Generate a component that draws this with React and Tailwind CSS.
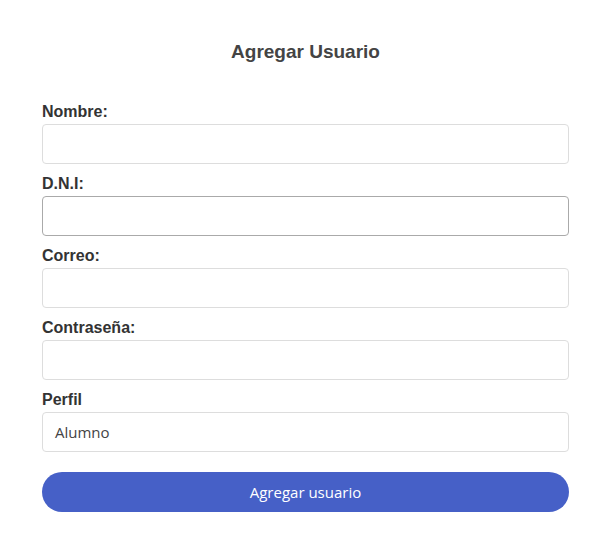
const FIELDS = [
  { label: "Nombre:", type: "text" },
  { label: "D.N.I:", type: "text", active: true },
  { label: "Correo:", type: "email" },
  { label: "Contraseña:", type: "password" },
];

export default function App() {
  return (
    <div className="min-h-screen bg-white font-['Liberation_Sans',Arial,sans-serif]">
      <div className="px-[42px] pt-[38px]">
        <h2 className="text-center text-[19px] leading-[28px] font-bold text-[#444]">
          Agregar Usuario
        </h2>

        <form className="mt-[35px]" onSubmit={(e) => e.preventDefault()}>
          {FIELDS.map((f) => (
            <div key={f.label} className="mb-[9px]">
              <label className="block text-[16px] leading-[20px] font-bold text-[#333] pt-[1px] mb-[2px]">
                {f.label}
              </label>
              <input
                type={f.type}
                className={`block w-full h-[40px] rounded-[4px] border bg-white px-3 outline-none ${
                  f.active ? "border-[#aaa]" : "border-[#ddd]"
                }`}
              />
            </div>
          ))}

          <div className="mb-[9px]">
            <label className="block text-[16px] leading-[20px] font-bold text-[#333] pt-[1px] mb-[2px]">
              Perfil
            </label>
            <div className="flex items-center h-[40px] rounded-[4px] border border-[#ddd] px-3 font-['Open_Sans',sans-serif] text-[15px] text-[#444]">
              Alumno
            </div>
          </div>

          <button
            type="submit"
            className="mt-[11px] w-full h-[40px] rounded-full bg-[#4660c7] text-white text-[15px] font-['Open_Sans',sans-serif]"
          >
            Agregar usuario
          </button>
        </form>
      </div>
    </div>
  );
}
